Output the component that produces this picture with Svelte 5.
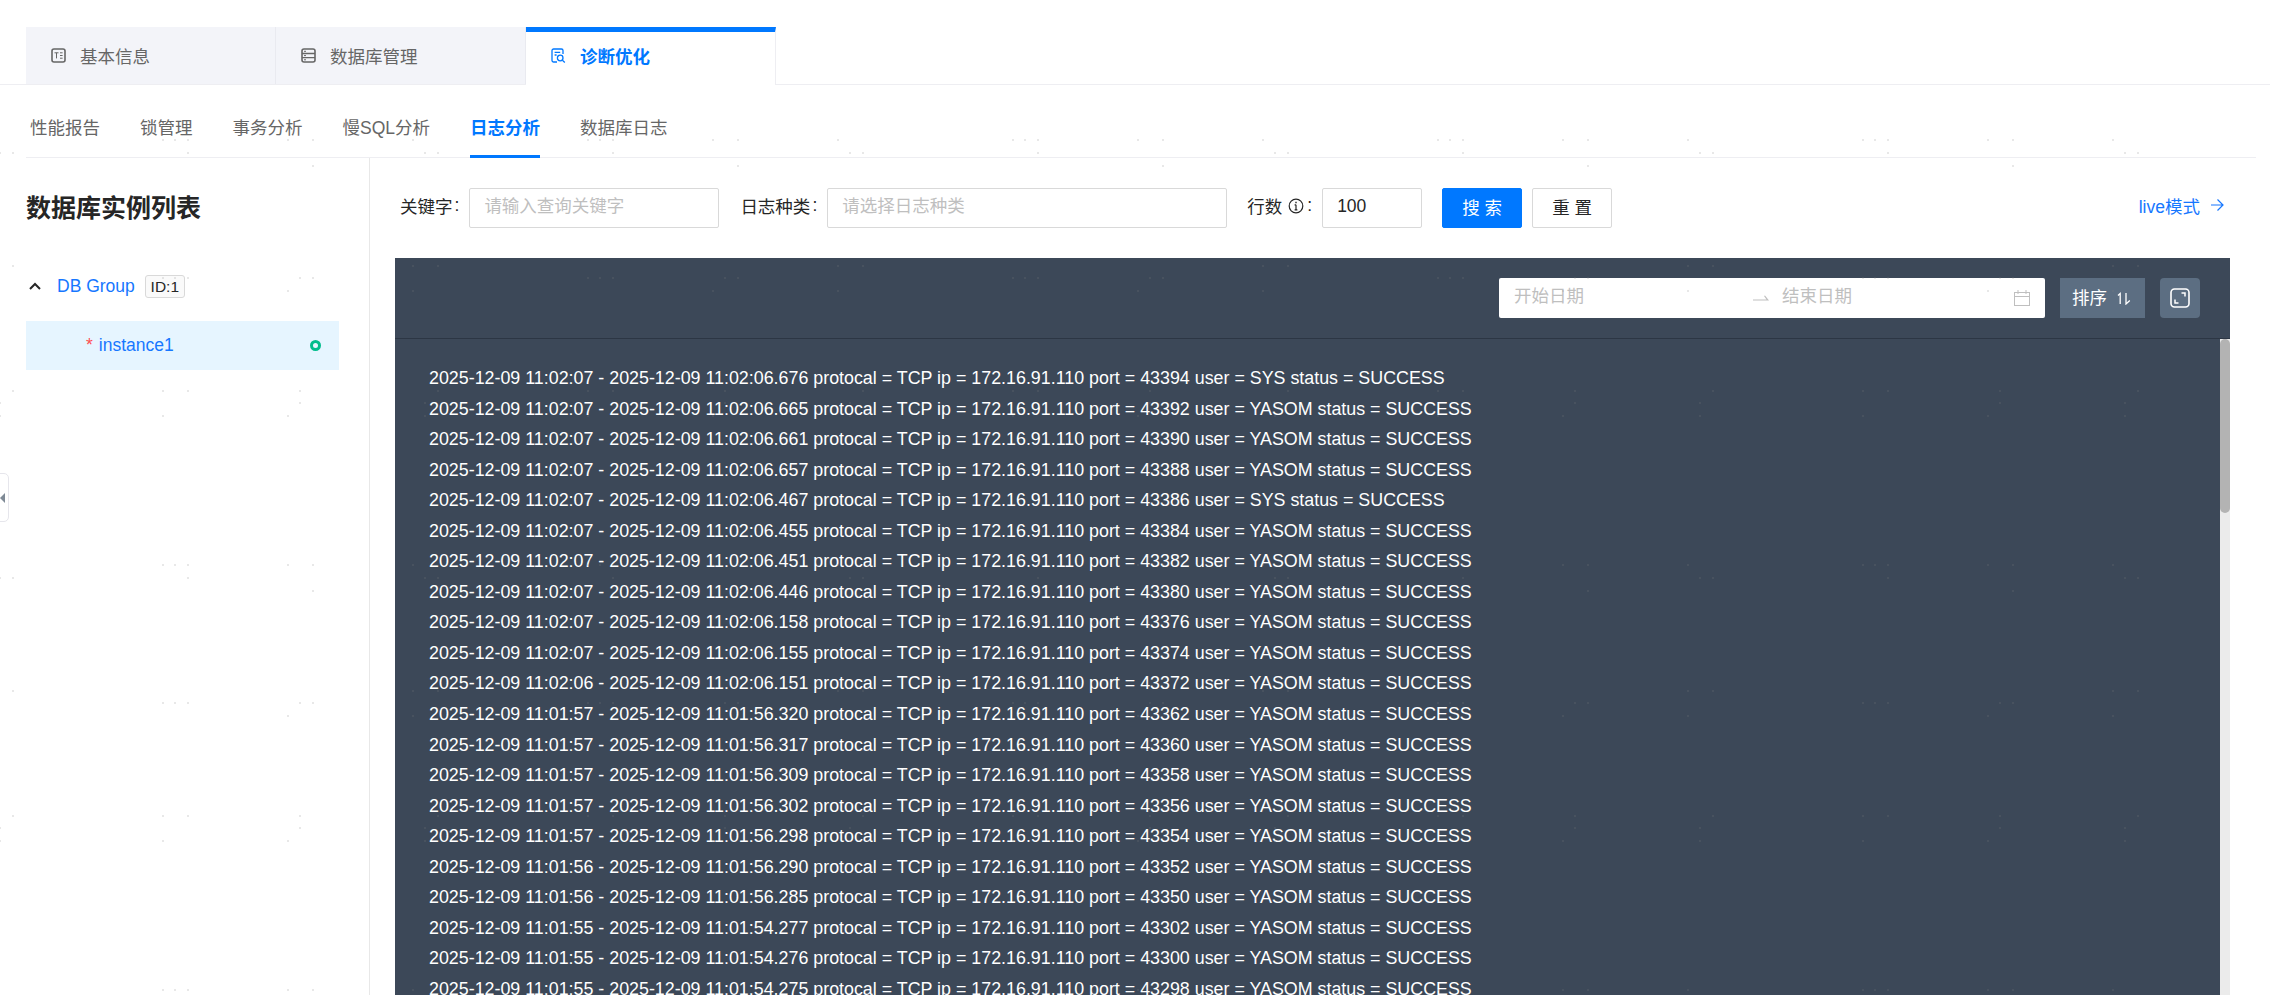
<script>
  const mainTabs = ['基本信息', '数据库管理', '诊断优化']
  const subTabs = ['性能报告', '锁管理', '事务分析', '慢SQL分析', '日志分析', '数据库日志']

  // start, end, port, user
  const logs = [
    ['11:02:07', '11:02:06.676', 43394, 'SYS'],
    ['11:02:07', '11:02:06.665', 43392, 'YASOM'],
    ['11:02:07', '11:02:06.661', 43390, 'YASOM'],
    ['11:02:07', '11:02:06.657', 43388, 'YASOM'],
    ['11:02:07', '11:02:06.467', 43386, 'SYS'],
    ['11:02:07', '11:02:06.455', 43384, 'YASOM'],
    ['11:02:07', '11:02:06.451', 43382, 'YASOM'],
    ['11:02:07', '11:02:06.446', 43380, 'YASOM'],
    ['11:02:07', '11:02:06.158', 43376, 'YASOM'],
    ['11:02:07', '11:02:06.155', 43374, 'YASOM'],
    ['11:02:06', '11:02:06.151', 43372, 'YASOM'],
    ['11:01:57', '11:01:56.320', 43362, 'YASOM'],
    ['11:01:57', '11:01:56.317', 43360, 'YASOM'],
    ['11:01:57', '11:01:56.309', 43358, 'YASOM'],
    ['11:01:57', '11:01:56.302', 43356, 'YASOM'],
    ['11:01:57', '11:01:56.298', 43354, 'YASOM'],
    ['11:01:56', '11:01:56.290', 43352, 'YASOM'],
    ['11:01:56', '11:01:56.285', 43350, 'YASOM'],
    ['11:01:55', '11:01:54.277', 43302, 'YASOM'],
    ['11:01:55', '11:01:54.276', 43300, 'YASOM'],
    ['11:01:55', '11:01:54.275', 43298, 'YASOM']
  ]

  // faint dots of the page watermark, one 425px tile
  const dots = [
    [139, [162, 174, 187, 287, 312, 412]],
    [152, [-1, 12, 187]],
    [165, [312]],
    [265, [12, 412]],
    [277, [162, 174, 187, 299, 312]],
    [290, [287, 412]],
    [390, [12, 162, 187, 299]],
    [402, [-1, 299]],
    [415, [-1, 162, 287]]
  ]
</script>

<div class="page">
  <div class="main-tabs">
    {#each mainTabs as tab, i}
      <div class="main-tab" class:active={i === 2}>
        {#if i === 0}
          <svg class="tab-icon" viewBox="0 0 15 15" fill="none" stroke="currentColor">
            <rect x="1" y="1" width="13" height="13" rx="2" stroke-width="1.6" />
            <path d="M3.5 4.8h4M5.5 4.8v5.6M9 4.8h2.6M9 7.5h2.6M9 10.2h2.6" stroke-width="1" />
          </svg>
        {:else if i === 1}
          <svg class="tab-icon" viewBox="0 0 15 15" fill="none" stroke="currentColor">
            <rect x="1" y="1" width="13" height="13" rx="2" stroke-width="1.6" />
            <path d="M1 5.5h13M1 9.7h13" stroke-width="1.3" />
            <path d="M3 3.3h2M3 7.6h2M3 11.8h2" stroke-width="1" />
          </svg>
        {:else}
          <svg class="tab-icon" viewBox="0 0 15 15" fill="none" stroke="currentColor" stroke-width="1.3">
            <path d="M6 14H2.6A1.6 1.6 0 0 1 1 12.4V2.6A1.6 1.6 0 0 1 2.6 1h7.8A1.6 1.6 0 0 1 12 2.6V6" />
            <path d="M3.6 4.3h5.6M3.6 7h2" />
            <circle cx="9.2" cy="10" r="2.8" />
            <path d="M11.4 12.2l2.4 2.2" />
          </svg>
        {/if}
        <span>{tab}</span>
      </div>
    {/each}
  </div>

  <div class="sub-tabs">
    {#each subTabs as tab, i}
      <div class="sub-tab" class:active={i === 4}>{tab}</div>
    {/each}
  </div>

  <div class="content">
    <aside class="sidebar">
      <h2>数据库实例列表</h2>
      <div class="group">
        <svg class="chevron" viewBox="0 0 12 8" fill="none" stroke="#262626" stroke-width="2">
          <path d="M1 7l5-5 5 5" />
        </svg>
        <span class="group-name">DB Group</span>
        <span class="badge">ID:1</span>
      </div>
      <div class="instance">
        <span class="star">*</span>
        <span class="instance-name">instance1</span>
        <span class="status"></span>
      </div>
    </aside>

    <main class="main">
      <div class="toolbar">
        <label class="field-label" for="kw">关键字<span class="colon">:</span></label>
        <input id="kw" class="field kw" placeholder="请输入查询关键字" />
        <label class="field-label" for="kind">日志种类<span class="colon">:</span></label>
        <input id="kind" class="field kind" placeholder="请选择日志种类" />
        <label class="field-label" for="rows"><span>行数</span><svg class="info" viewBox="0 0 16 16" fill="none" stroke="#262626">
            <circle cx="8" cy="8" r="6.8" stroke-width="1.2" />
            <path d="M8 6.8v5M6.6 6.9H8M6.6 11.8h2.8" stroke-width="1.2" />
            <path d="M8 3.8v1.4" stroke-width="1.4" />
          </svg><span class="colon">:</span></label>
        <input id="rows" class="field rows" value="100" />
        <button class="btn primary">搜 索</button>
        <button class="btn">重 置</button>
        <span class="live">
          live模式
          <svg viewBox="0 0 14 14" fill="none" stroke="currentColor" stroke-width="1.2">
            <path d="M1 7h12M7.5 1.5L13 7l-5.500 5.500" />
          </svg>
        </span>
      </div>

      <section class="panel">
        <div class="panel-head">
          <div class="range">
            <input class="date" placeholder="开始日期" />
            <svg class="range-arrow" viewBox="0 0 16 6" fill="#bfbfbf">
              <path d="M0 4.500h13.500L11 1l1-.6L16 5.500H0z" />
            </svg>
            <input class="date end" placeholder="结束日期" />
            <svg class="calendar" viewBox="0 0 16 16" fill="none" stroke="#bfbfbf">
              <rect x="0.500" y="2.500" width="15" height="13" />
              <path d="M0.500 6.500h15M4 0v4M12 0v4" />
            </svg>
          </div>
          <button class="sort">
            <span>排序</span>
            <svg viewBox="0 0 15 13" fill="none" stroke="#fff" stroke-width="1.3">
              <path d="M2 3.500L4.200 1.500V12M10 1v11L13.800 8.500" />
            </svg>
          </button>
          <button class="expand" aria-label="全屏">
            <svg viewBox="0 0 20 20" fill="none" stroke="#fff">
              <rect x="1" y="1" width="18" height="18" rx="3.500" stroke-width="1.600" />
              <path d="M11.500 5h3.500v3.500M5 11.500V15h3.500" stroke-width="1.500" />
            </svg>
          </button>
        </div>
        <div class="panel-body">
          <div class="log">
            {#each logs as [start, end, port, user]}
              <div>2025-12-09 {start} - 2025-12-09 {end} protocal = TCP ip = 172.16.91.110 port = {port} user = {user} status = SUCCESS</div>
            {/each}
          </div>
          <div class="scroll"><div class="thumb"></div></div>
        </div>
      </section>
    </main>
  </div>

  <div class="collapse"><span></span></div>

  <svg class="watermark" width="100%" height="100%" aria-hidden="true">
    <defs>
      <pattern id="wm" x="-1" y="0" width="425" height="425" patternUnits="userSpaceOnUse">
        {#each dots as [y, xs]}
          {#each xs as x}
            <rect x={x + 1} {y} width="2" height="2" />
          {/each}
        {/each}
      </pattern>
    </defs>
    <rect width="100%" height="100%" fill="url(#wm)" />
  </svg>
</div>

<style>
  :global(body) {
    margin: 0;
    background: #fff;
  }
  .page {
    position: relative;
    height: 995px;
    overflow: hidden;
    display: flex;
    flex-direction: column;
    padding-top: 27px;
    box-sizing: border-box;
    font-family: "Liberation Sans", "Noto Sans CJK SC", sans-serif;
    font-size: 17.5px;
    color: #262626;
  }
  .main-tabs {
    display: flex;
    height: 57px;
    padding-left: 26px;
    border-bottom: 1px solid #eeeef2;
    flex-shrink: 0;
  }
  .main-tab {
    width: 250px;
    height: 57px;
    box-sizing: border-box;
    display: flex;
    align-items: center;
    gap: 14px;
    padding-left: 25px;
    background: #f3f4f9;
    border-right: 1px solid #e9eaf0;
    color: #666;
  }
  .main-tab.active {
    background: #fff;
    color: #0078ff;
    font-weight: 700;
    border-top: 5px solid #0078ff;
    border-right: 1px solid #eeeef2;
    height: 58px;
    padding-bottom: 6px;
  }
  .tab-icon {
    width: 15px;
    height: 15px;
    flex-shrink: 0;
  }
  .sub-tabs {
    display: flex;
    gap: 40px;
    height: 72px;
    margin: 0 14px 0 26px;
    padding-left: 4px;
    border-bottom: 1px solid #eeeef2;
    flex-shrink: 0;
  }
  .sub-tab {
    height: 71px;
    padding-top: 30px;
    box-sizing: border-box;
    line-height: 26px;
    color: #666;
  }
  .sub-tab.active {
    color: #0078ff;
    font-weight: 700;
    border-bottom: 3px solid #0078ff;
    height: 73px;
  }
  .content {
    flex: 1;
    display: flex;
    min-height: 0;
  }
  .sidebar {
    width: 370px;
    box-sizing: border-box;
    flex-shrink: 0;
    border-right: 1px solid #e8e8e8;
    padding: 34px 30px 0 26px;
  }
  .sidebar h2 {
    margin: 0 0 50px;
    font-size: 25px;
    line-height: 32px;
    font-weight: 700;
    color: #262626;
  }
  .group {
    display: flex;
    align-items: center;
    height: 24px;
    padding-left: 3px;
  }
  .chevron {
    width: 12px;
    height: 8px;
    margin-right: 16px;
  }
  .group-name {
    color: #1677ff;
  }
  .badge {
    margin-left: 10px;
    width: 40px;
    height: 23px;
    box-sizing: border-box;
    text-align: center;
    border: 1px solid #d9d9d9;
    border-radius: 3px;
    background: #fafafa;
    font-size: 15.500px;
    line-height: 21px;
  }
  .instance {
    display: flex;
    align-items: center;
    width: 313px;
    height: 49px;
    margin-top: 23px;
    padding: 0 18px 0 60px;
    box-sizing: border-box;
    background: #e6f5ff;
  }
  .star {
    color: #ff4d4f;
    margin-right: 6px;
    font-size: 17.5px;
  }
  .instance-name {
    flex: 1;
    color: #1677ff;
  }
  .status {
    width: 11px;
    height: 11px;
    box-sizing: border-box;
    border: 3px solid #00bd8c;
    border-radius: 50%;
  }
  .main {
    flex: 1;
    min-width: 0;
    padding: 30px 40px 0 25px;
    display: flex;
    flex-direction: column;
  }
  .toolbar {
    display: flex;
    align-items: center;
    height: 40px;
    padding: 0 6px 0 5px;
    margin-bottom: 30px;
    flex-shrink: 0;
  }
  .field-label {
    display: flex;
    align-items: center;
    margin-right: 10px;
    padding-bottom: 5px;
    white-space: pre;
  }
  .colon {
    margin-left: 2px;
  }
  .field {
    height: 40px;
    box-sizing: border-box;
    border: 1px solid #d9d9d9;
    border-radius: 2px;
    padding: 0 14px 4px;
    font: inherit;
    color: #262626;
    outline: none;
  }
  .field::placeholder,
  .date::placeholder {
    color: #bfbfbf;
  }
  .kw {
    width: 250px;
    margin-right: 21px;
  }
  .kind {
    width: 400px;
    margin-right: 20px;
  }
  .rows {
    width: 100px;
    margin-right: 20px;
  }
  .info {
    width: 16px;
    height: 16px;
    margin: 0 1px 0 6px;
  }
  .btn {
    width: 80px;
    height: 40px;
    margin-right: 10px;
    padding: 0 0 4px;
    border: 1px solid #d9d9d9;
    border-radius: 2px;
    background: #fff;
    font: inherit;
    color: #262626;
  }
  .btn.primary {
    background: #0078ff;
    border-color: #0078ff;
    color: #fff;
  }
  .live {
    margin-left: auto;
    display: flex;
    align-items: center;
    gap: 10px;
    padding-bottom: 6px;
    color: #1677ff;
  }
  .live svg {
    width: 14px;
    height: 14px;
  }
  .panel {
    flex: 1;
    min-height: 0;
    display: flex;
    flex-direction: column;
    background: #3c4858;
  }
  .panel-head {
    display: flex;
    justify-content: flex-end;
    align-items: center;
    gap: 15px;
    height: 81px;
    padding-right: 30px;
    box-sizing: border-box;
    border-bottom: 1px solid #2c3644;
    flex-shrink: 0;
  }
  .range {
    display: flex;
    align-items: center;
    width: 546px;
    height: 40px;
    box-sizing: border-box;
    padding: 0 15px;
    background: #fff;
    border-radius: 2px;
  }
  .date {
    width: 239px;
    border: 0;
    padding: 0 0 3px;
    font: inherit;
    outline: none;
    background: transparent;
  }
  .date.end {
    flex: 1;
    width: 0;
    margin-left: 13px;
  }
  .range-arrow {
    width: 16px;
    height: 6px;
    flex-shrink: 0;
  }
  .calendar {
    width: 16px;
    height: 16px;
    flex-shrink: 0;
  }
  .sort {
    width: 85px;
    height: 40px;
    display: flex;
    align-items: center;
    justify-content: center;
    gap: 9px;
    border: 0;
    padding: 0 2px 0 0;
    background: #5c6e82;
    color: #fff;
    font: inherit;
  }
  .sort span {
    padding-bottom: 3px;
  }
  .sort svg {
    width: 15px;
    height: 13px;
  }
  .expand {
    width: 40px;
    height: 40px;
    padding: 0;
    display: flex;
    align-items: center;
    justify-content: center;
    border: 0;
    border-radius: 4px;
    background: #5c6e82;
  }
  .expand svg {
    width: 20px;
    height: 20px;
  }
  .panel-body {
    flex: 1;
    min-height: 0;
    display: flex;
    overflow: hidden;
  }
  .log {
    flex: 1;
    padding: 24px 0 0 34px;
    color: #fff;
    font-size: 17.85px;
    line-height: 30.550px;
    white-space: nowrap;
  }
  .scroll {
    width: 10px;
    background: #ebebeb;
    flex-shrink: 0;
  }
  .thumb {
    height: 174px;
    background: #b3b3b3;
    border-radius: 5px;
  }
  .collapse {
    position: absolute;
    left: -1px;
    top: 473px;
    width: 10px;
    height: 49px;
    box-sizing: border-box;
    display: flex;
    align-items: center;
    background: #fff;
    border: 1px solid #e6e6ec;
    border-radius: 0 5px 5px 0;
  }
  .collapse span {
    border-style: solid;
    border-width: 5px 5px 5px 0;
    border-color: transparent #7f8a96 transparent transparent;
    margin-left: 0;
  }
  .watermark {
    position: absolute;
    inset: 0;
    pointer-events: none;
    fill: rgba(128, 128, 128, 0.18);
  }
</style>
